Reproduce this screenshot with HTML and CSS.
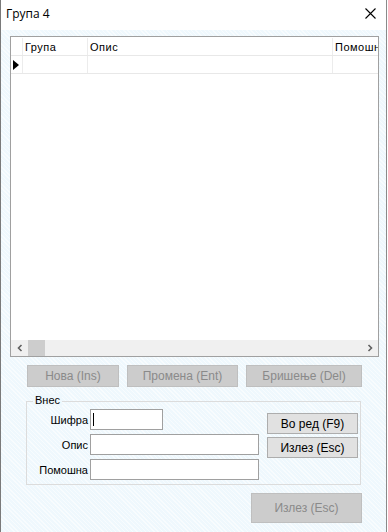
FILE: index.html
```html
<!DOCTYPE html>
<html lang="mk">
<head>
    <meta charset="UTF-8">
    <title>Група 4</title>
    <link rel="stylesheet" href="styles.css">
</head>
<body>
    <div class="window">
        <div class="titlebar">
            <span class="title">Група 4</span>
            <svg class="close" width="11" height="11" viewBox="0 0 11 11">
                <path d="M0.5 0.5 L10.5 10.5 M10.5 0.5 L0.5 10.5" stroke="#000" stroke-width="1.1"/>
            </svg>
        </div>

        <div class="content">
            <div class="grid">
                <div class="grid-head">
                    <div class="rowhead"></div>
                    <div class="col c-grupa">Група</div>
                    <div class="col c-opis">Опис</div>
                    <div class="col c-pom">Помошн</div>
                </div>
                <div class="grid-row">
                    <div class="rowhead">
                        <svg width="6" height="10" viewBox="0 0 6 10"><path d="M0 0 L6 5 L0 10 Z" fill="#000"/></svg>
                    </div>
                    <div class="col c-grupa"></div>
                    <div class="col c-opis"></div>
                    <div class="col c-pom"></div>
                </div>
                <div class="grid-body"></div>
                <div class="hscroll">
                    <svg class="arr" width="8" height="8" viewBox="0 0 8 8"><path d="M5.5 1 L2.5 4 L5.5 7" stroke="#606060" stroke-width="1.6" fill="none"/></svg>
                    <div class="thumb"></div>
                    <div class="track"></div>
                    <svg class="arr" width="8" height="8" viewBox="0 0 8 8"><path d="M2.5 1 L5.5 4 L2.5 7" stroke="#606060" stroke-width="1.6" fill="none"/></svg>
                </div>
            </div>

            <div class="actions">
                <button class="btn off b-nova">Нова (Ins)</button>
                <button class="btn off b-promena">Промена (Ent)</button>
                <button class="btn off b-brisenje">Бришење (Del)</button>
            </div>

            <div class="groupbox">
                <span class="legend">Внес</span>
                <div class="fields">
                    <div class="field">
                        <label>Шифра</label>
                        <div class="input short"><span class="caret"></span></div>
                    </div>
                    <div class="field">
                        <label>Опис</label>
                        <div class="input long"></div>
                    </div>
                    <div class="field">
                        <label>Помошна</label>
                        <div class="input long"></div>
                    </div>
                </div>
                <div class="side">
                    <button class="btn on">Во ред (F9)</button>
                    <button class="btn on">Излез (Esc)</button>
                </div>
            </div>

            <div class="footer">
                <button class="btn off b-exit">Излез (Esc)</button>
            </div>
        </div>
    </div>
</body>
</html>
```

FILE: styles.css
```css
body {
    margin: 0;
    width: 388px;
    height: 532px;
    overflow: hidden;
    background: #fff;
    font-family: "Liberation Sans", Arial, sans-serif;
    font-size: 11px;
}
.window {
    width: 385px;
    height: 532px;
    border-left: 1px solid #7a7a7a;
    border-right: 1px solid #8a8a8a;
    background-color: #eff8fd;
    background-image: repeating-linear-gradient(45deg, rgba(255,255,255,0.55) 0 1px, transparent 1px 3px);
    display: flex;
    flex-direction: column;
}
.titlebar {
    height: 30px;
    background: #fff;
    display: flex;
    align-items: center;
    justify-content: space-between;
    padding: 0 10px 0 5px;
}
.title {
    font-family: "Open Sans", "Liberation Sans", sans-serif;
    font-size: 12px;
    color: #000;
    margin-top: -3px;
}
.close {
    margin-top: -3px;
}
.content {
    padding: 6px 0 0 9px;
}
.grid {
    width: 367px;
    height: 319px;
    border: 1px solid #a0a0a0;
    background: #fff;
    display: flex;
    flex-direction: column;
}
.grid-head,
.grid-row {
    display: flex;
    height: 17px;
    border-bottom: 1px solid #e8e8e8;
}
.grid-head {
    margin-top: 1px;
}
.rowhead {
    width: 12px;
    border-right: 1px solid #ececec;
    display: flex;
    align-items: center;
    padding-left: 2px;
    box-sizing: border-box;
}
.col {
    border-right: 1px solid #ececec;
    box-sizing: border-box;
    padding: 3px 0 0 2px;
    letter-spacing: 0.5px;
    color: #000;
    white-space: nowrap;
    overflow: hidden;
}
.c-grupa { width: 65px; }
.c-opis { width: 245px; }
.c-pom { flex: 1; border-right: none; }
.grid-body {
    flex: 1;
}
.hscroll {
    height: 16px;
    background: #f0f0f0;
    display: flex;
    align-items: center;
}
.hscroll .arr {
    margin: 0 4px 0 5px;
}
.thumb {
    width: 17px;
    height: 16px;
    background: #cdcdcd;
}
.track {
    flex: 1;
}
.btn {
    font-family: "Liberation Sans", Arial, sans-serif;
    font-size: 12px;
    height: 22px;
    box-sizing: border-box;
    padding: 0;
    cursor: pointer;
}
.btn.off {
    background: #cccccc;
    border: 1px solid #bfbfbf;
    color: #8a8a8a;
}
.btn.on {
    background: #e1e1e1;
    border: 1px solid #adadad;
    color: #000;
    width: 91px;
    height: 21px;
}
.actions {
    display: flex;
    margin: 8px 0 0 17px;
}
.b-nova { width: 92px; }
.b-promena { width: 111px; margin-left: 8px; }
.b-brisenje { width: 116px; margin-left: 8px; }
.groupbox {
    position: relative;
    margin: 14px 0 0 16px;
    width: 335px;
    height: 84px;
    border: 1px solid #dcdcdc;
    box-sizing: border-box;
    display: flex;
}
.legend {
    position: absolute;
    top: -8px;
    left: 6px;
    padding: 0 2px;
    background: #eff8fd;
    color: #000;
}
.fields {
    display: flex;
    flex-direction: column;
    gap: 4px;
    padding-top: 7px;
}
.field {
    display: flex;
    align-items: center;
}
.field label {
    width: 61px;
    text-align: right;
    padding-right: 2px;
    color: #000;
}
.input {
    height: 21px;
    box-sizing: border-box;
    background: #fff;
    border: 1px solid #a0a0a0;
    display: flex;
    align-items: center;
}
.input.short { width: 73px; }
.input.long { width: 169px; }
.caret {
    width: 1px;
    height: 13px;
    background: #000;
    margin-left: 2px;
}
.side {
    display: flex;
    flex-direction: column;
    gap: 3px;
    padding: 11px 0 0 8px;
}
.footer {
    margin: 8px 0 0 241px;
}
.b-exit {
    width: 111px;
    height: 30px;
}
```
